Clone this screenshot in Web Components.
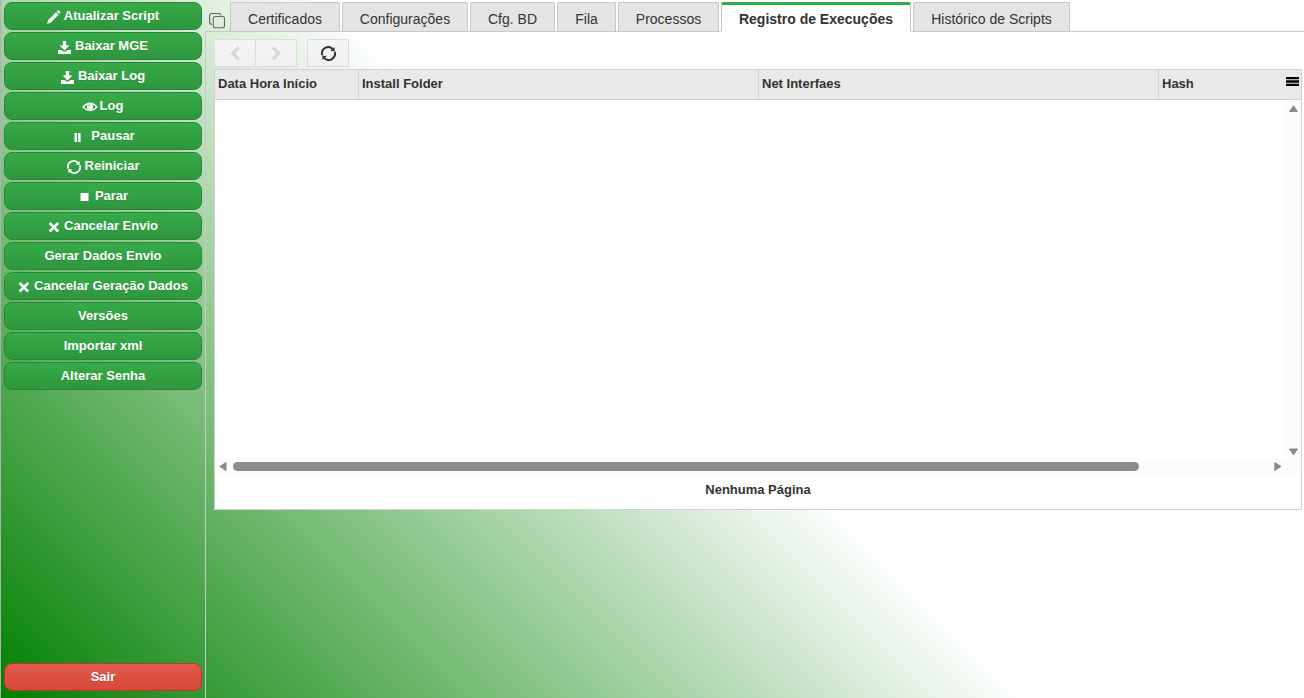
<!DOCTYPE html>
<html lang="pt-BR">
<head>
<meta charset="utf-8">
<title>Registro de Execuções</title>
<style>
	html, body {
		height: 100%;
		margin: 0;
		overflow: hidden;
	}

	body {
		font-family: "Liberation Sans", Arial, sans-serif;
		font-size: 13px;
		color: #333;
	}
</style>
</head>
<body>
<app-shell>
	<side-bar slot="side">
		<menu-button icon="pencil">Atualizar Script</menu-button>
		<menu-button icon="download">Baixar MGE</menu-button>
		<menu-button icon="download">Baixar Log</menu-button>
		<menu-button icon="eye">Log</menu-button>
		<menu-button icon="pause">Pausar</menu-button>
		<menu-button icon="refresh">Reiniciar</menu-button>
		<menu-button icon="stop">Parar</menu-button>
		<menu-button icon="close">Cancelar Envio</menu-button>
		<menu-button>Gerar Dados Envio</menu-button>
		<menu-button icon="close">Cancelar Geração Dados</menu-button>
		<menu-button>Versões</menu-button>
		<menu-button>Importar xml</menu-button>
		<menu-button>Alterar Senha</menu-button>
		<menu-button slot="bottom" danger>Sair</menu-button>
	</side-bar>
	<tab-strip slot="tabs">
		<tab-item style="width:110px">Certificados</tab-item>
		<tab-item style="width:126px">Configurações</tab-item>
		<tab-item style="width:85px">Cfg. BD</tab-item>
		<tab-item style="width:59px">Fila</tab-item>
		<tab-item style="width:101px">Processos</tab-item>
		<tab-item style="width:190px" active>Registro de Execuções</tab-item>
		<tab-item style="width:157px">Histórico de Scripts</tab-item>
	</tab-strip>
	<nav-toolbar></nav-toolbar>
	<data-grid>
		<grid-column slot="columns" style="width:144px">Data Hora Início</grid-column>
		<grid-column slot="columns" style="width:400px">Install Folder</grid-column>
		<grid-column slot="columns" style="width:400px">Net Interfaes</grid-column>
		<grid-column slot="columns" style="flex:1" last>Hash</grid-column>
		<span slot="footer">Nenhuma Página</span>
	</data-grid>
</app-shell>

<script>
const REFRESH = `
	<path d="M1.2 8.6A5.8 5.8 0 0 1 11 2.9M12.8 5.4A5.8 5.8 0 0 1 3 11.1" fill="none" stroke="currentColor" stroke-width="1.8"/>
	<path d="M8.6 4.6L12.8 5L12.6 1ZM5.4 9.4L1.2 9L1.4 13Z" fill="currentColor"/>`;

// width of each icon box, vertical shift and its shapes
const ICONS = {
	pencil: { w: 13, h: 14, y: 1, svg: `<path d="M0 14L1.2 10L9 2.2L11.5 4.8L3.8 12.6ZM9.7 1.5L10.7.6Q11.4 0 12.1.6L13 1.5Q13.6 2.2 12.9 3L12.1 3.9Z" fill="currentColor"/>` },
	download: { w: 13, h: 13, y: 1.5, svg: `<path d="M4.8 0H8.2V4.5H11.3L6.5 9.4L1.7 4.5H4.8ZM0 9H3.5L5.3 10.5H7.7L9.5 9H13V13H0Z" fill="currentColor"/>` },
	eye: { w: 14, h: 10, y: 1.5, svg: `<path d="M-.1 5Q7-2.8 14.1 5Q7 12 -.1 5Z" fill="none" stroke="currentColor" stroke-width="1.3"/><circle cx="7" cy="4.7" r="3.1" fill="currentColor"/><path d="M5.3 4.6A1.8 1.8 0 0 1 6.9 2.9" fill="none" stroke="#32a043" stroke-width=".9"/>` },
	pause: { w: 16, h: 10, y: 1.5, svg: `<path d="M3.5 1H6V10H3.5ZM7.1 1H9.6V10H7.1Z" fill="currentColor"/>` },
	refresh: { w: 14, h: 14, y: 1.5, svg: REFRESH },
	stop: { w: 13, h: 8, y: 1.5, svg: `<path d="M2.5 0H10.5V8H2.5Z" fill="currentColor"/>` },
	close: { w: 12, h: 10, y: 1.5, svg: `<path d="M1.6 1L10.2 9.5M10.2 1L1.6 9.5" fill="none" stroke="currentColor" stroke-width="2.5"/>` }
};

class AppShell extends HTMLElement {
	constructor() {
		super();
		this.attachShadow({ mode: "open" });
		this.shadowRoot.innerHTML = `
		<style>
			:host {
				display: flex;
				height: 100vh;
				background: linear-gradient(45deg, green, white 729px);
			}

			main {
				flex: 1;
				min-width: 0;
				display: flex;
				flex-direction: column;
			}

			.panel {
				flex: 1;
				padding: 7px 2px 0 8px;
				border-left: 1px solid #c9c9c9;
				box-sizing: border-box;
			}
		</style>
		<slot name="side"></slot>
		<main>
			<slot name="tabs"></slot>
			<div class="panel"><slot></slot></div>
		</main>
		`;
	}
}

class SideBar extends HTMLElement {
	constructor() {
		super();
		this.attachShadow({ mode: "open" });
		this.shadowRoot.innerHTML = `
		<style>
			:host {
				display: flex;
				flex-direction: column;
				justify-content: space-between;
				width: 205px;
				padding: 2px 3px 7px;
				border-left: 1px solid #b0b0b0;
				box-sizing: border-box;
			}

			div {
				display: flex;
				flex-direction: column;
				gap: 2px;
			}
		</style>
		<div><slot></slot></div>
		<div><slot name="bottom"></slot></div>
		`;
	}
}

class MenuButton extends HTMLElement {
	constructor() {
		super();
		this.attachShadow({ mode: "open" });
	}

	connectedCallback() {
		const icon = ICONS[this.getAttribute("icon")];
		const svg = icon
			? `<svg width="${icon.w}" height="${icon.h}" viewBox="0 0 ${icon.w} ${icon.h}" style="margin-top:${icon.y * 2}px">${icon.svg}</svg>`
			: "";
		this.shadowRoot.innerHTML = `
		<style>
			:host {
				display: block;
			}

			button {
				display: flex;
				align-items: center;
				justify-content: center;
				gap: 4px;
				width: 198px;
				height: 28px;
				padding: 0 0 1px;
				border: 1px solid #2a8437;
				border-radius: 8px;
				box-sizing: border-box;
				background: linear-gradient(#36ab48, #2f963f);
				color: #fff;
				font: bold 13px "Liberation Sans", Arial, sans-serif;
				text-shadow: 0 1px 0 rgba(0, 0, 0, .12);
				white-space: nowrap;
			}

			:host([icon="eye"]) button {
				gap: 3px;
			}

			:host([danger]) button {
				border-color: #bd3628;
				background: linear-gradient(#df5c4e, #d84838);
			}

			svg {
				flex: none;
				overflow: visible;
			}
		</style>
		<button>${svg}<span><slot></slot></span></button>
		`;
	}
}

class TabStrip extends HTMLElement {
	constructor() {
		super();
		this.attachShadow({ mode: "open" });
		this.shadowRoot.innerHTML = `
		<style>
			:host {
				display: flex;
				gap: 2px;
				height: 32px;
				padding-top: 2px;
				box-sizing: border-box;
				background: linear-gradient(#c9c9c9, #c9c9c9) bottom / 100% 1px no-repeat;
			}

			svg {
				margin: 10px 2px 0 4px;
				flex: none;
			}
		</style>
		<svg width="17" height="17" viewBox="0 0 17 17" fill="none" stroke="#666" stroke-width="1.1">
			<path d="M3 12.5Q.6 12.2.6 10V3.5Q.6 1.5 2.6 1.5H9.6Q11.8 1.5 12 3.5"/>
			<rect x="4.3" y="4.5" width="11.2" height="11.2" rx="2"/>
		</svg>
		<slot></slot>
		`;
	}
}

class TabItem extends HTMLElement {
	constructor() {
		super();
		this.attachShadow({ mode: "open" });
		this.shadowRoot.innerHTML = `
		<style>
			:host {
				display: block;
				height: 30px;
				padding-top: 8px;
				border: 1px solid #cbc5c7;
				border-bottom-color: #c9c9c9;
				border-radius: 2px 2px 0 0;
				box-sizing: border-box;
				background: #e4e4e4;
				font-size: 14px;
				line-height: 16px;
				text-align: center;
				white-space: nowrap;
			}

			:host([active]) {
				padding-top: 6px;
				border-top: 3px solid #36a947;
				border-bottom-color: #fff;
				background: #fff;
				font-weight: bold;
			}
		</style>
		<slot></slot>
		`;
	}
}

class NavToolbar extends HTMLElement {
	constructor() {
		super();
		this.attachShadow({ mode: "open" });
		this.shadowRoot.innerHTML = `
		<style>
			:host {
				display: flex;
				gap: 10px;
				height: 28px;
				margin-bottom: 2px;
			}

			div {
				display: flex;
			}

			button {
				display: flex;
				align-items: center;
				justify-content: center;
				width: 42px;
				height: 28px;
				padding: 0;
				border: 1px solid #dcdcdc;
				border-radius: 1px;
				background: linear-gradient(#f6f6f6, #f0f0f0);
				color: #333;
			}

			button + button {
				margin-left: -1px;
			}

			.off {
				color: #d6d6d6;
			}
		</style>
		<div>
			<button class="off"><svg width="12" height="16" viewBox="0 0 12 16"><path d="M9.7 2.3L3.7 8.3L9.7 14.3" fill="none" stroke="currentColor" stroke-width="3.2"/></svg></button>
			<button class="off"><svg width="12" height="16" viewBox="0 0 12 16"><path d="M2.8 2.3L8.8 8.3L2.8 14.3" fill="none" stroke="currentColor" stroke-width="3.2"/></svg></button>
		</div>
		<button><svg width="15" height="15" viewBox="0 0 14 14">${REFRESH}</svg></button>
		`;
	}
}

class GridColumn extends HTMLElement {
	constructor() {
		super();
		this.attachShadow({ mode: "open" });
		this.shadowRoot.innerHTML = `
		<style>
			:host {
				display: block;
				padding: 6px 3px 0;
				border-right: 1px solid #d2d2d2;
				box-sizing: border-box;
				font-weight: bold;
				line-height: 16px;
				white-space: nowrap;
			}

			:host([last]) {
				border-right: 0;
			}
		</style>
		<slot></slot>
		`;
	}
}

class DataGrid extends HTMLElement {
	constructor() {
		super();
		this.attachShadow({ mode: "open" });
		this.shadowRoot.innerHTML = `
		<style>
			:host {
				display: flex;
				flex-direction: column;
				height: 441px;
				border: 1px solid #d2d2d2;
				box-sizing: border-box;
				background: #fff;
			}

			header {
				display: flex;
				height: 29px;
				border-bottom: 1px solid #d2d2d2;
				background: #e9e9e9;
			}

			header svg {
				margin: 7px 2px 0 0;
			}

			.body {
				display: grid;
				grid-template: 359px 15px / 1fr 15px;
			}

			.v {
				display: flex;
				flex-direction: column;
				justify-content: space-between;
				align-items: center;
				padding: 5px 0 3px;
				box-sizing: border-box;
				background: #fcfcfc;
			}

			.h {
				grid-row: 2;
				grid-column: 1 / 3;
				display: flex;
				align-items: center;
				padding: 0 19px 0 4px;
				background: #fcfcfc;
			}

			.thumb {
				width: 906px;
				height: 9px;
				margin: 0 auto 0 6px;
				border-radius: 5px;
				background: #8b8b8b;
			}

			.body path {
				fill: #8b8b8b;
				stroke: #8b8b8b;
				stroke-linejoin: round;
			}

			footer {
				padding-top: 8px;
				font-weight: bold;
				line-height: 16px;
				text-align: center;
			}
		</style>
		<header>
			<slot name="columns"></slot>
			<svg width="13" height="11" viewBox="0 0 13 11"><path d="M0 0H13V2.3H0ZM0 3.3H13V5.7H0ZM0 6.7H13V9H0Z"/></svg>
		</header>
		<div class="body">
			<div></div>
			<div class="v">
				<svg width="9" height="8" viewBox="0 0 9 8"><path d="M4.5 .8L8.5 6.5H.5Z"/></svg>
				<svg width="9" height="8" viewBox="0 0 9 8"><path d="M.5 1H8.5L4.5 6.8Z"/></svg>
			</div>
			<div class="h">
				<svg width="8" height="9" viewBox="0 0 8 9"><path d="M.8 4.5L7 .5V8.5Z"/></svg>
				<div class="thumb"></div>
				<svg width="8" height="9" viewBox="0 0 8 9"><path d="M7 4.5L.8 .5V8.5Z"/></svg>
			</div>
		</div>
		<footer><slot name="footer"></slot></footer>
		`;
	}
}

customElements.define("app-shell", AppShell);
customElements.define("side-bar", SideBar);
customElements.define("menu-button", MenuButton);
customElements.define("tab-strip", TabStrip);
customElements.define("tab-item", TabItem);
customElements.define("nav-toolbar", NavToolbar);
customElements.define("grid-column", GridColumn);
customElements.define("data-grid", DataGrid);
</script>
</body>
</html>
